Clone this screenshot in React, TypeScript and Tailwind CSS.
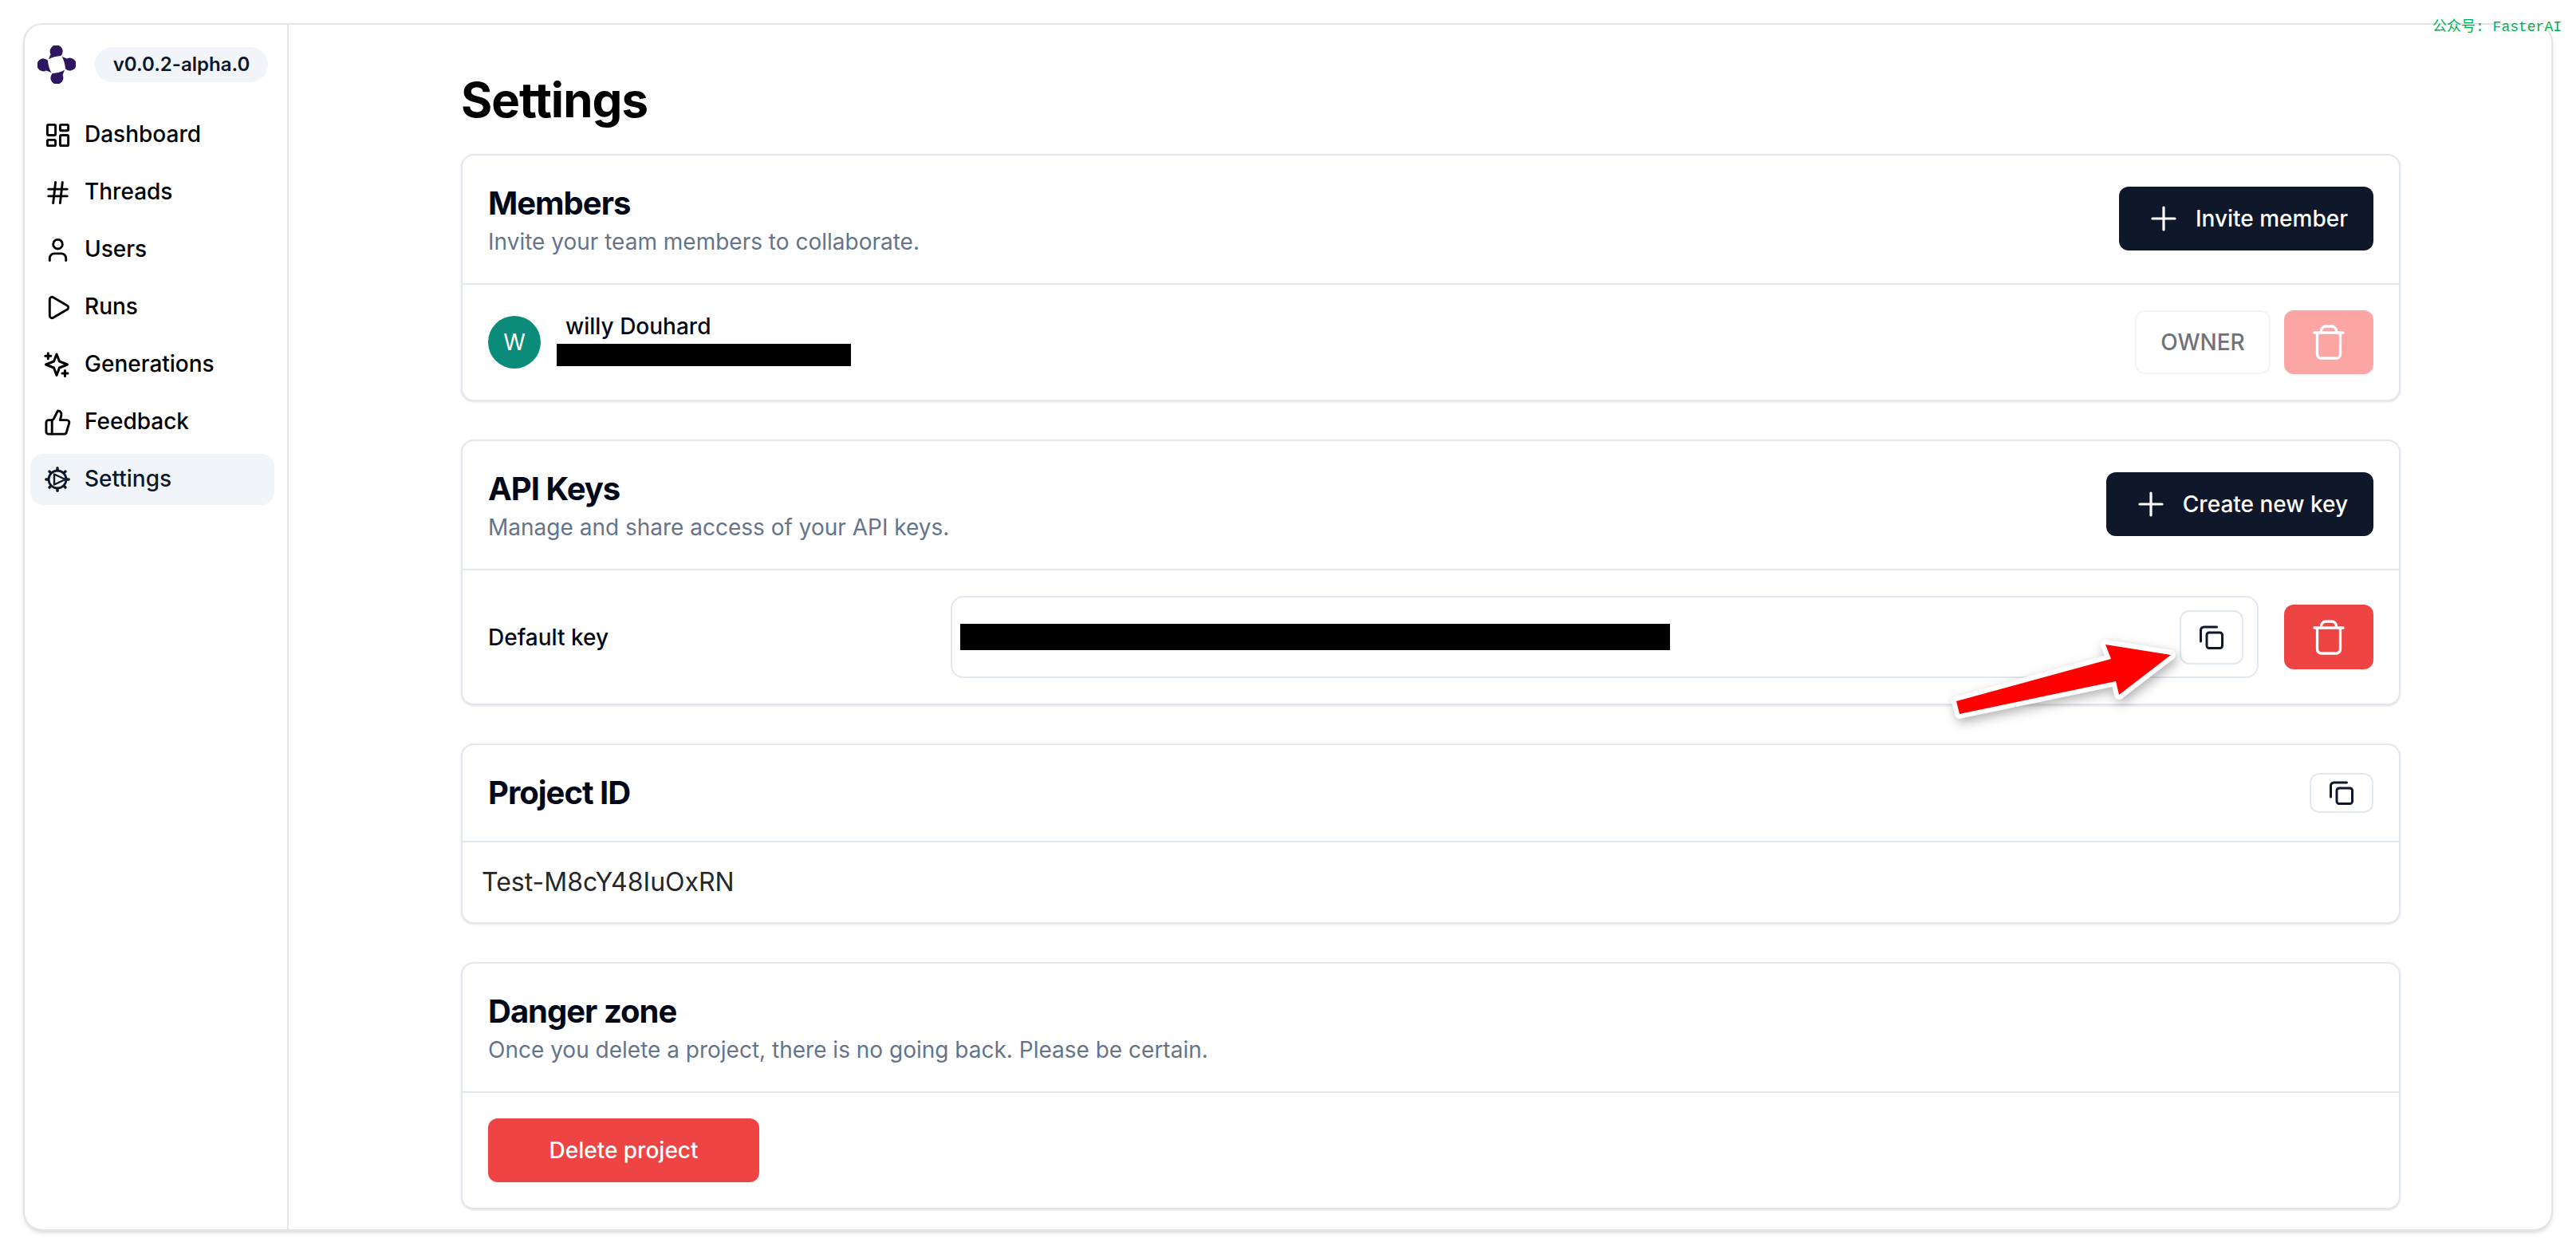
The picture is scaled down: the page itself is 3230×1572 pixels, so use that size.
import React from 'react';
import { Hash, LayoutDashboard, Play, Plus, ThumbsUp, User } from 'lucide-react';

const Logo = () => (
  <svg width="48" height="48" viewBox="0 0 48 48" fill="#2e1760" className="shrink-0">
    {[0, 90, 180, 270].map(angle => (
      <path
        key={angle}
        transform={`rotate(${angle} 24 24)`}
        d="M14 17.3 L16.5 11 A8 8 0 1 1 29.3 13 Q21 13.5 14 17.3 Z"
      />
    ))}
  </svg>
);

const GenerationsIcon = () => (
  <svg width="34" height="34" viewBox="0 0 34 34" fill="none" stroke="currentColor" strokeWidth="3" strokeLinejoin="round" strokeLinecap="round">
    <path d="M16 4 L19.5 13 L29.5 17 L19.5 21 L16 30.500 L12.500 21 L2.500 17 L12.500 13 Z" />
    <path d="M5.300 2.800 V9.800 M1.800 6.300 H8.800" />
    <path d="M26.500 24.500 V31.500 M23 28 H30" />
  </svg>
);

const SettingsIcon = () => (
  <svg width="34" height="34" viewBox="0 0 34 34" fill="none" stroke="currentColor" strokeWidth="2.800" strokeLinejoin="round" strokeLinecap="round">
    <circle cx="17" cy="17" r="11" />
    <path d="M13 10.500 L27 17 L13 23.500 Z" strokeWidth="2.400" />
    {[0, 45, 90, 135, 180, 225, 270, 315].map(angle => (
      <path key={angle} transform={`rotate(${angle} 17 17)`} d="M17 2.800 V5.500" strokeWidth="3.400" />
    ))}
  </svg>
);

const TrashIcon = () => (
  <svg width="40" height="44" viewBox="0 0 40 44" fill="none" stroke="currentColor" strokeWidth="3.300" strokeLinejoin="round" strokeLinecap="round">
    <path d="M2 10 H38" />
    <path d="M5.500 10 V37 A5 5 0 0 0 10.500 42 H29.500 A5 5 0 0 0 34.500 37 V10" />
    <path d="M10.500 10 V8 A6 6 0 0 1 16.500 2 H23.500 A6 6 0 0 1 29.500 8 V10" />
  </svg>
);

const CopyIcon = () => (
  <svg width="30" height="30" viewBox="0 0 30 30" fill="none" stroke="#0f172a" strokeWidth="3" strokeLinejoin="round" strokeLinecap="round">
    <rect x="9" y="9" width="19.500" height="19.500" rx="3" />
    <path d="M21.500 2 H5.500 A4 4 0 0 0 1.500 6 V20" />
  </svg>
);

const nav = [
  { label: 'Dashboard', icon: <LayoutDashboard size={35} /> },
  { label: 'Threads', icon: <Hash size={35} /> },
  { label: 'Users', icon: <User size={35} /> },
  { label: 'Runs', icon: <Play size={35} /> },
  { label: 'Generations', icon: <GenerationsIcon /> },
  { label: 'Feedback', icon: <ThumbsUp size={35} /> },
  { label: 'Settings', icon: <SettingsIcon />, active: true },
];

const Sidebar = () => (
  <aside className="w-[331px] shrink-0 border-r-2 border-[#e2e8f0] flex flex-col">
    <div className="flex items-center gap-[24px] pl-[16px] pt-[26px]">
      <Logo />
      <span className="h-[44px] w-[217px] rounded-full bg-[#f1f5f9] flex items-center justify-center text-[24px] font-semibold text-[#0f172a]">
        v0.0.2-alpha.0
      </span>
    </div>
    <nav className="mt-[32px] ml-[7px] w-[306px] flex flex-col gap-[8px]">
      {nav.map(item => (
        <div
          key={item.label}
          className={`h-[64px] rounded-[16px] flex items-center pl-[16px] text-[28px] font-medium ${
            item.active ? 'bg-[#f1f5f9] text-[#0f172a]' : 'text-black'
          }`}
        >
          <span className="w-[36px] flex justify-center shrink-0">{item.icon}</span>
          <span className="ml-[16px] -mt-[2px]">{item.label}</span>
        </div>
      ))}
    </nav>
  </aside>
);

const Card: React.FC<{ children: React.ReactNode }> = ({ children }) => (
  <section className="rounded-[16px] border-2 border-[#e2e8f0] bg-white shadow-sm">{children}</section>
);

const CardHeader: React.FC<{ title: string; text: string; action?: React.ReactNode }> = ({ title, text, action }) => (
  <div className="flex items-center justify-between border-b-2 border-[#e2e8f0] px-[32px] pt-[34px] pb-[32px]">
    <div>
      <h2 className="mt-[2px] text-[40px] leading-[48px] font-bold tracking-[-1px] text-[#020817]">{title}</h2>
      <p className="mt-[4px] text-[28px] leading-[40px] text-[#64748b]">{text}</p>
    </div>
    {action}
  </div>
);

const DarkButton: React.FC<{ label: string }> = ({ label }) => (
  <button className="-mt-[5px] h-[80px] pl-[32px] pr-[32px] rounded-[12px] bg-[#0f172a] text-white text-[28px] font-medium flex items-center gap-[16px]">
    <Plus size={48} strokeWidth={1.6} />
    {label}
  </button>
);

const Redacted: React.FC<{ className: string }> = ({ className }) => <div className={`bg-black ${className}`} />;

export default function App() {
  return (
    <div className="relative h-[1572px] bg-white p-[29px] font-['Inter',sans-serif]">
      <div className="h-[1514px] rounded-[24px] border-2 border-[#e4e4e7] shadow-md flex overflow-hidden bg-white">
        <Sidebar />
        <main className="flex-1 pl-[216px] pr-[189px] flex flex-col gap-[48px]">
          <div className="flex flex-col">
            <h1 className="text-[60px] leading-[72px] font-bold tracking-[-1px] text-black mt-[58px] mb-[32px]">Settings</h1>
            <Card>
              <CardHeader title="Members" text="Invite your team members to collaborate." action={<DarkButton label="Invite member" />} />
              <div className="flex items-center p-[32px]">
                <div className="w-[66px] h-[66px] rounded-full bg-[#0b8c7a] text-white text-[28px] flex items-center justify-center shrink-0">W</div>
                <div className="ml-[20px] flex flex-col h-[70px]">
                  <span className="ml-[11px] -mt-[3px] text-[28px] leading-[36px] font-medium text-[#020817]">willy Douhard</span>
                  <Redacted className="w-[369px] h-[28px] mt-[4px]" />
                </div>
                <span className="ml-auto h-[80px] w-[170px] rounded-[12px] border-2 border-[#f1f5f9] flex items-center justify-center text-[28px] font-medium text-[#71717a]">OWNER</span>
                <button className="ml-[17px] h-[80px] w-[112px] rounded-[12px] bg-[#fca5a5] text-white flex items-center justify-center"><TrashIcon /></button>
              </div>
            </Card>
          </div>

          <Card>
            <CardHeader title="API Keys" text="Manage and share access of your API keys." action={<DarkButton label="Create new key" />} />
            <div className="flex items-center p-[32px]">
              <span className="w-[580px] shrink-0 text-[28px] font-medium text-[#020817]">Default key</span>
              <div className="flex-1 h-[103px] rounded-[16px] border-2 border-[#e2e8f0] flex items-center justify-between pl-[10px] pr-[17px]">
                <Redacted className="w-[890px] h-[33px]" />
                <button className="h-[68px] w-[80px] rounded-[12px] border-2 border-[#e2e8f0] flex items-center justify-center"><CopyIcon /></button>
              </div>
              <button className="ml-[32px] h-[81px] w-[112px] rounded-[12px] bg-[#ef4444] text-white flex items-center justify-center"><TrashIcon /></button>
            </div>
          </Card>

          <Card>
            <div className="flex items-center justify-between border-b-2 border-[#e2e8f0] h-[122px] px-[32px]">
              <h2 className="text-[40px] font-bold tracking-[-1px] text-[#020817]">Project ID</h2>
              <button className="h-[50px] w-[80px] rounded-[12px] border-2 border-[#e2e8f0] flex items-center justify-center"><CopyIcon /></button>
            </div>
            <div className="h-[100px] pl-[24px] flex items-center text-[32px] text-[#27272a]">Test-M8cY48IuOxRN</div>
          </Card>

          <Card>
            <CardHeader title="Danger zone" text="Once you delete a project, there is no going back. Please be certain." />
            <div className="p-[32px]">
              <button className="h-[80px] w-[340px] rounded-[12px] bg-[#ef4444] text-white text-[28px] font-medium">Delete project</button>
            </div>
          </Card>
        </main>
      </div>

      <svg className="absolute left-[2430px] top-[790px] drop-shadow-[3px_5px_7px_rgba(0,0,0,0.3)]" width="310" height="125" viewBox="2430 790 310 125">
        <polygon
          points="2453,879 2647,826 2640,808 2722,821 2657,871 2653,854 2457,895"
          fill="#ff0000"
          stroke="#ffffff"
          strokeWidth="12"
          strokeLinejoin="round"
          paintOrder="stroke"
        />
      </svg>

      <span className="absolute left-[3050px] top-[23px] text-[18px] leading-[22px] text-[#00b050] font-['Liberation_Mono','Noto_Sans_CJK_SC',monospace]">公众号: FasterAI</span>
    </div>
  );
}
